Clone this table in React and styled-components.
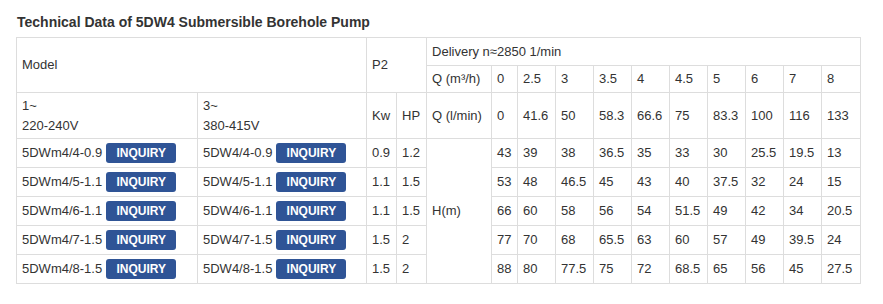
import React from "react";
import styled, { createGlobalStyle } from "styled-components";

const Global = createGlobalStyle`
  html, body { margin: 0; padding: 0; background: #fff; }
  body { font-family: "Liberation Sans", Arial, sans-serif; color: #333; }
`;

const Page = styled.div`
  padding: 14px 16px 0 16px;
`;

const Title = styled.h4`
  margin: 0 0 6px 1px;
  font-size: 14px;
  line-height: 17px;
  font-weight: bold;
  color: #333;
`;

const Table = styled.table`
  border-collapse: collapse;
  table-layout: fixed;
  width: 844px;
  font-size: 13px;
  color: #333;
`;

const Cell = styled.td`
  border: 1px solid #ddd;
  padding: 0 5px;
  height: ${(p) => p.$h || 28}px;
  line-height: 20px;
  vertical-align: middle;
  text-align: left;
  white-space: nowrap;
  overflow: hidden;
`;

const Button = styled.a`
  display: inline-block;
  vertical-align: middle;
  margin-left: 4px;
  margin-top: -1px;
  width: 70px;
  height: 20px;
  box-sizing: border-box;
  line-height: 20px;
  border-radius: 3px;
  background: #2f5496;
  color: #fff;
  font-size: 12px;
  font-weight: bold;
  text-align: center;
  text-decoration: none;
`;

const widths = [181, 169, 30, 30, 65, 26, 38, 38, 38, 38, 38, 38, 38, 38, 39];

const qm3 = ["0", "2.5", "3", "3.5", "4", "4.5", "5", "6", "7", "8"];
const ql = ["0", "41.6", "50", "58.3", "66.6", "75", "83.3", "100", "116", "133"];

const rows = [
  { m1: "5DWm4/4-0.9", m3: "5DW4/4-0.9", kw: "0.9", hp: "1.2", h: ["43", "39", "38", "36.5", "35", "33", "30", "25.5", "19.5", "13"] },
  { m1: "5DWm4/5-1.1", m3: "5DW4/5-1.1", kw: "1.1", hp: "1.5", h: ["53", "48", "46.5", "45", "43", "40", "37.5", "32", "24", "15"] },
  { m1: "5DWm4/6-1.1", m3: "5DW4/6-1.1", kw: "1.1", hp: "1.5", h: ["66", "60", "58", "56", "54", "51.5", "49", "42", "34", "20.5"] },
  { m1: "5DWm4/7-1.5", m3: "5DW4/7-1.5", kw: "1.5", hp: "2", h: ["77", "70", "68", "65.5", "63", "60", "57", "49", "39.5", "24"] },
  { m1: "5DWm4/8-1.5", m3: "5DW4/8-1.5", kw: "1.5", hp: "2", h: ["88", "80", "77.5", "75", "72", "68.5", "65", "56", "45", "27.5"] },
];

export default function App() {
  return (
    <Page>
      <Global />
      <Title>Technical Data of 5DW4 Submersible Borehole Pump</Title>
      <Table>
        <colgroup>
          {widths.map((w, i) => (
            <col key={i} style={{ width: w }} />
          ))}
        </colgroup>
        <tbody>
          <tr>
            <Cell colSpan={2} rowSpan={2}>Model</Cell>
            <Cell colSpan={2} rowSpan={2}>P2</Cell>
            <Cell colSpan={11} $h={27}>Delivery n≈2850 1/min</Cell>
          </tr>
          <tr>
            <Cell $h={26}>Q (m³/h)</Cell>
            {qm3.map((v, i) => (
              <Cell key={i} $h={26}>{v}</Cell>
            ))}
          </tr>
          <tr>
            <Cell $h={45}>1~<br />220-240V</Cell>
            <Cell $h={45}>3~<br />380-415V</Cell>
            <Cell $h={45}>Kw</Cell>
            <Cell $h={45}>HP</Cell>
            <Cell $h={45}>Q (l/min)</Cell>
            {ql.map((v, i) => (
              <Cell key={i} $h={45}>{v}</Cell>
            ))}
          </tr>
          {rows.map((r, ri) => (
            <tr key={ri}>
              <Cell>{r.m1}<Button href="#">INQUIRY</Button></Cell>
              <Cell>{r.m3}<Button href="#">INQUIRY</Button></Cell>
              <Cell>{r.kw}</Cell>
              <Cell>{r.hp}</Cell>
              {ri === 0 && <Cell rowSpan={5}>H(m)</Cell>}
              {r.h.map((v, i) => (
                <Cell key={i}>{v}</Cell>
              ))}
            </tr>
          ))}
        </tbody>
      </Table>
    </Page>
  );
}
